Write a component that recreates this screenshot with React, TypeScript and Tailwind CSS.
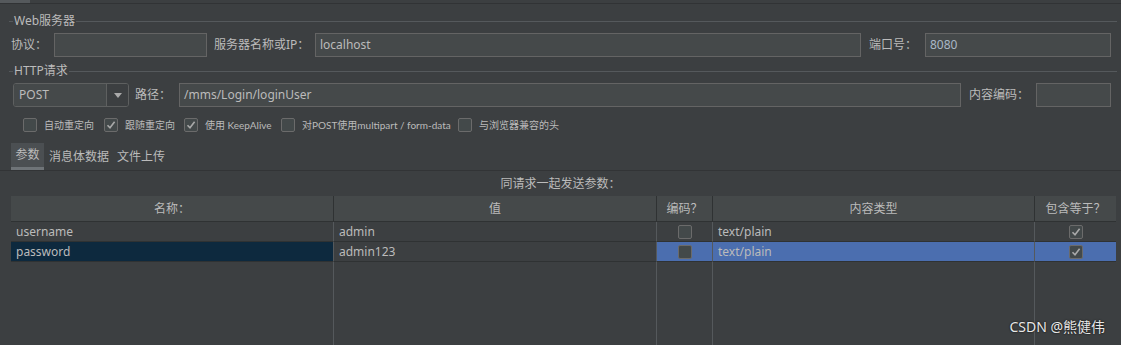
import type { ReactNode } from "react";

const font = "font-['Noto_Sans','Noto_Sans_CJK_SC',sans-serif]";

const Legend = ({ title }: { title: string }) => (
  <div className="flex h-[18px] items-center pl-[9px] pr-[4px]">
    <div className="h-px w-[4px] bg-[#55595c]" />
    <span className="px-[1px] text-[12px] text-[#bbbbbb]">{title}</span>
    <div className="h-px flex-1 bg-[#55595c]" />
  </div>
);

const Field = ({ value, className, blue }: { value?: string; className: string; blue?: boolean }) => (
  <div
    className={`flex h-[24px] items-center border border-[#646464] bg-[#45494a] px-[4px] text-[12px] ${
      blue ? "text-[#a9b7c6]" : "text-[#bbbbbb]"
    } ${className}`}
  >
    {value}
  </div>
);

const Box = ({ checked, className = "" }: { checked?: boolean; className?: string }) => (
  <div
    className={`flex h-[14px] w-[14px] items-center justify-center rounded-[2px] border border-[#6b6b6b] bg-[#43494a] ${className}`}
  >
    {checked && (
      <svg width="10" height="10" viewBox="0 0 10 10">
        <path d="M1.5 5.2 L4 7.8 L8.6 1.8" fill="none" stroke="#a9a9a9" strokeWidth="1.6" />
      </svg>
    )}
  </div>
);

const Option = ({ label, checked, w }: { label: string; checked?: boolean; w: string }) => (
  <div className={`flex items-center ${w}`}>
    <Box checked={checked} />
    <span className="ml-[7px] whitespace-nowrap font-['Lato','Noto_Sans_CJK_SC',sans-serif] text-[10px] text-[#bbbbbb]">
      {label}
    </span>
  </div>
);

const cols = "grid grid-cols-[323px_323px_56px_322px_81px]";

const Cell = ({ children, className = "" }: { children?: ReactNode; className?: string }) => (
  <div className={`flex h-[20px] items-center border-b border-[#2f3233] text-[12px] text-[#bbbbbb] ${className}`}>
    {children}
  </div>
);

const rows = [
  { name: "username", value: "admin", selected: false },
  { name: "password", value: "admin123", selected: true },
];

export default function App() {
  return (
    <div className={`relative flex h-[345px] w-[1121px] flex-col overflow-hidden bg-[#3c3f41] ${font}`}>
      <div className="flex h-[4px] border-b border-[#313335]">
        <div className="w-[30px] bg-[#55595c]" />
      </div>

      <div className="mt-[8px]">
        <Legend title="Web服务器" />
      </div>
      <div className="mt-[3px] flex items-center pl-[11px] pr-[10px] text-[12px] text-[#bbbbbb]">
        <span className="w-[43px]">协议：</span>
        <Field className="w-[153px]" />
        <span className="ml-[7px] w-[101px]">服务器名称或IP：</span>
        <Field className="flex-1" value="localhost" />
        <span className="ml-[8px] w-[56px]">端口号：</span>
        <Field className="w-[186px]" value="8080" blue />
      </div>

      <div className="mt-[5px]">
        <Legend title="HTTP请求" />
      </div>
      <div className="mt-[3px] flex items-center pl-[13px] pr-[10px] text-[12px] text-[#bbbbbb]">
        <div className="flex h-[24px] w-[116px] overflow-hidden rounded-[3px] border border-[#5e6060]">
          <div className="flex flex-1 items-center bg-[#45494a] pl-[5px]">POST</div>
          <div className="flex w-[22px] items-center justify-center border-l border-[#5e6060] bg-[#3c3f41]">
            <svg width="8" height="5" viewBox="0 0 8 5">
              <path d="M0 0 H8 L4 5 Z" fill="#aaaaaa" />
            </svg>
          </div>
        </div>
        <span className="ml-[6px] w-[44px]">路径：</span>
        <Field className="flex-1" value="/mms/Login/loginUser" />
        <span className="ml-[8px] w-[67px]">内容编码：</span>
        <Field className="w-[75px]" />
      </div>

      <div className="mt-[8px] flex h-[20px] items-center pl-[23px]">
        <Option label="自动重定向" w="w-[81px]" />
        <Option label="跟随重定向" checked w="w-[80px]" />
        <Option label="使用 KeepAlive" checked w="w-[97px]" />
        <Option label="对POST使用multipart / form-data" w="w-[177px]" />
        <Option label="与浏览器兼容的头" w="w-[120px]" />
      </div>

      <div className="mt-[8px] flex h-[28px] items-stretch border-b border-[#323436] pl-[11px] text-[12px] text-[#bbbbbb]">
        <div className="flex w-[33px] flex-col bg-[#4b4f52]">
          <span className="flex flex-1 items-center justify-center">参数</span>
          <div className="h-[3px] bg-[#6f7478]" />
        </div>
        <span className="ml-[5px] flex items-center">消息体数据</span>
        <span className="ml-[8px] flex items-center">文件上传</span>
      </div>

      <div className="flex h-[25px] items-center justify-center text-[12px] text-[#bbbbbb]">同请求一起发送参数：</div>

      <div className="ml-[11px] flex w-[1105px] flex-1 flex-col">
        <div className={`${cols} h-[26px] border-b border-[#2f3233] bg-[#45494a] text-[12px] text-[#bbbbbb]`}>
          <div className="flex items-center justify-center border-r border-[#2f3233]">名称：</div>
          <div className="flex items-center justify-center border-r border-[#2f3233]">值</div>
          <div className="flex items-center justify-center border-r border-[#2f3233]">编码？</div>
          <div className="flex items-center justify-center border-r border-[#2f3233]">内容类型</div>
          <div className="flex items-center justify-center">包含等于？</div>
        </div>
        {rows.map((r) => (
          <div key={r.name} className={`${cols} h-[20px]`}>
            <Cell className={`border-r border-r-[#55595c] pl-[5px] ${r.selected ? "bg-[#0d293e]" : ""}`}>{r.name}</Cell>
            <Cell className="border-r border-r-[#55595c] pl-[5px]">{r.value}</Cell>
            <Cell className={`justify-center border-r border-r-[#55595c] ${r.selected ? "bg-[#4b6eaf]" : ""}`}>
              <Box className={r.selected ? "bg-[#3c3f41]" : ""} />
            </Cell>
            <Cell className={`border-r border-r-[#55595c] pl-[5px] ${r.selected ? "bg-[#4b6eaf]" : ""}`}>text/plain</Cell>
            <Cell className={`justify-center ${r.selected ? "bg-[#4b6eaf]" : ""}`}>
              <Box checked className="bg-[#3c3f41]" />
            </Cell>
          </div>
        ))}
        <div className={`${cols} flex-1`}>
          <div className="border-r border-[#55595c]" />
          <div className="border-r border-[#55595c]" />
          <div className="border-r border-[#55595c]" />
          <div className="border-r border-[#55595c]" />
          <div />
        </div>
      </div>

      <div className="absolute bottom-[8px] right-[16px] text-[14px] text-[#e8e8e8] [text-shadow:0_0_2px_#000]">
        CSDN @熊健伟
      </div>
    </div>
  );
}
